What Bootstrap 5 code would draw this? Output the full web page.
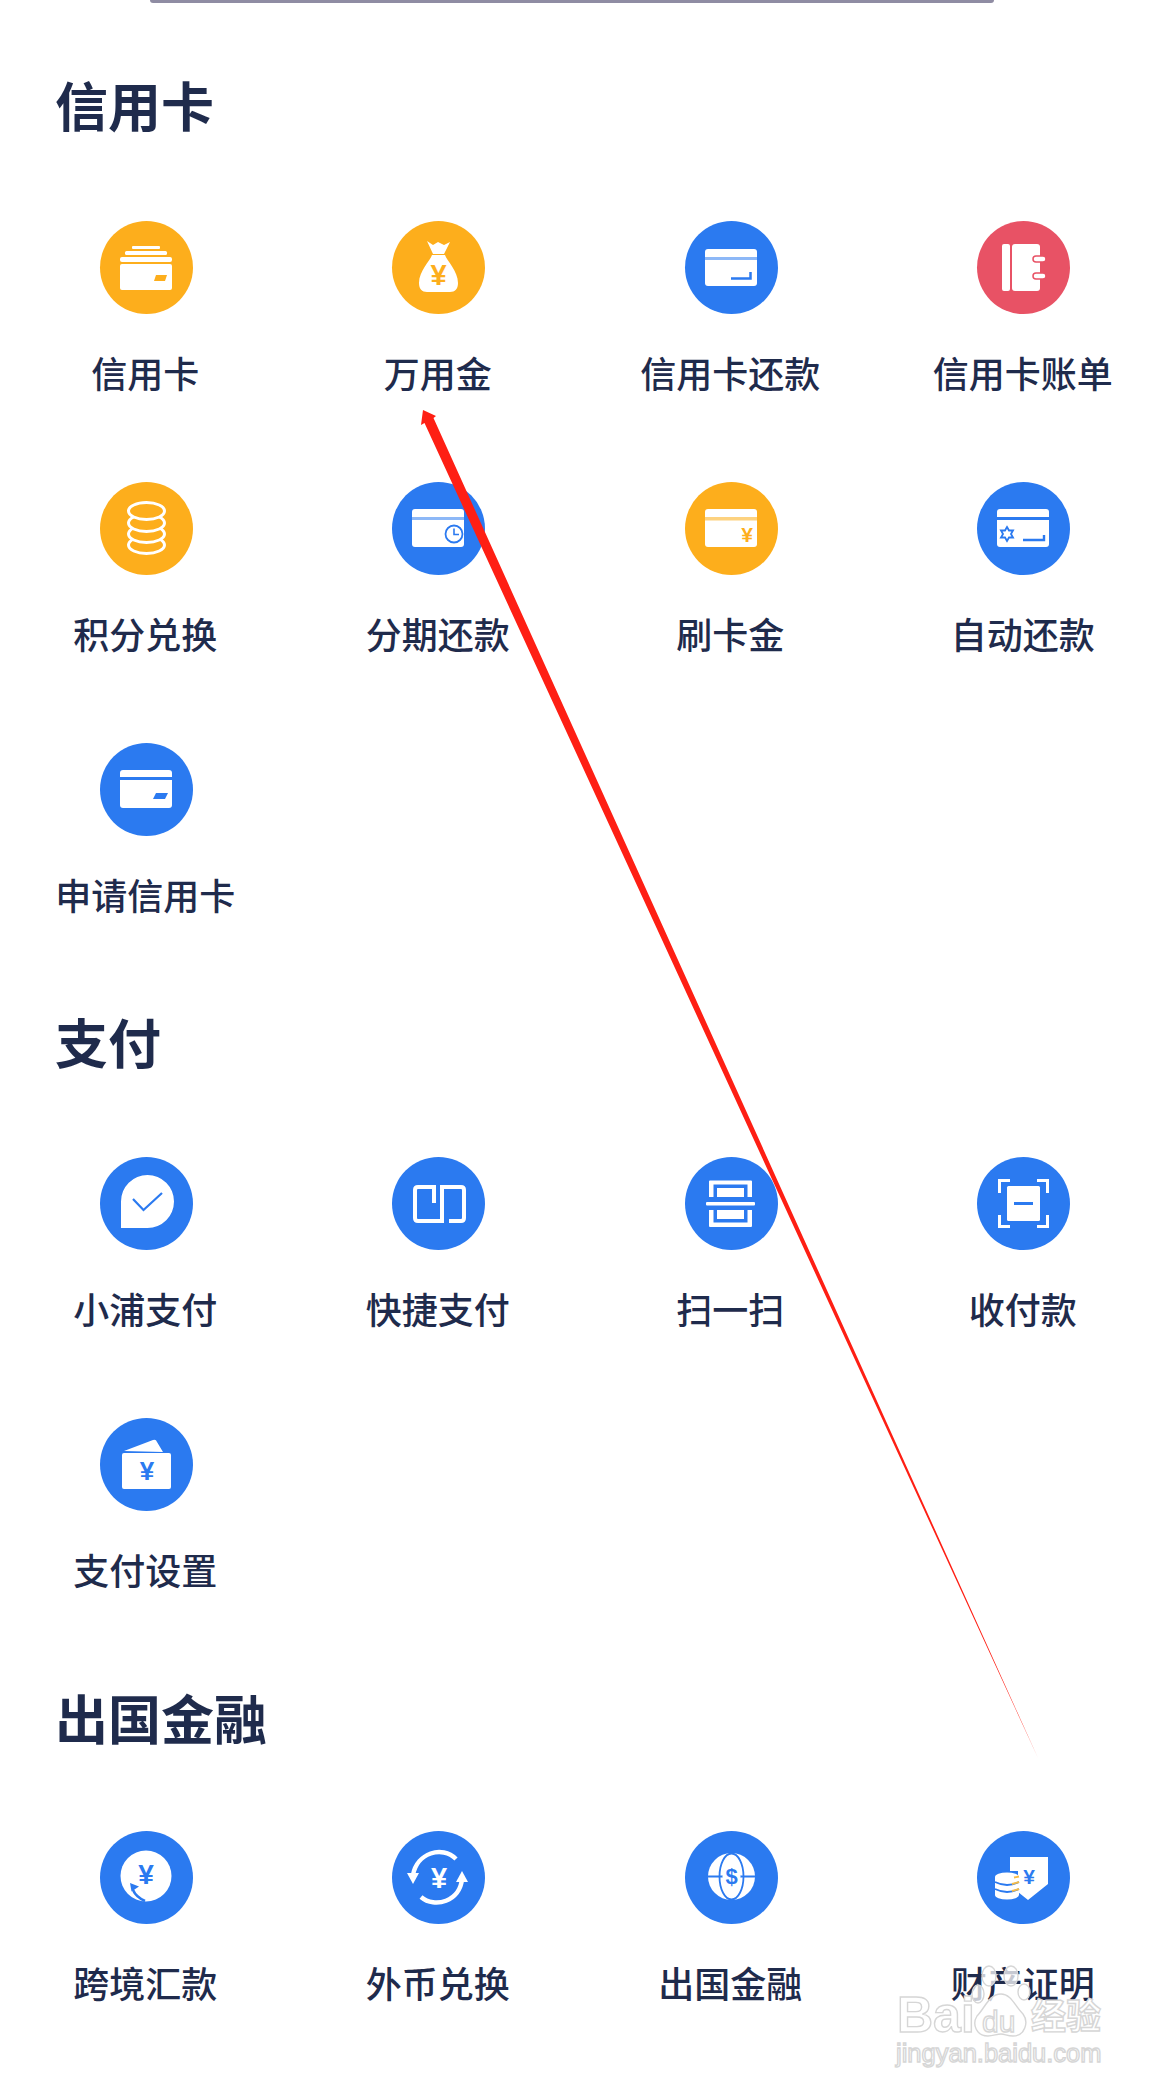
<!DOCTYPE html>
<html lang="zh-CN">
<head>
  <meta charset="UTF-8" />
  <meta name="viewport" content="width=device-width, initial-scale=1.0" />
  <title>信用卡</title>
  <link href="https://cdn.jsdelivr.net/npm/bootstrap@5.3.0/dist/css/bootstrap.min.css" rel="stylesheet" />
  <style>
    body {
      background: #fff;
      color: #1f2b4c;
      font-family: "Noto Sans CJK SC", "Liberation Sans", sans-serif;
      overflow: hidden;
    }
    .page-wrap { height: 2091px; }
    .top-bar {
      width: 844px;
      height: 3px;
      margin-left: 150px;
      background: #8f8ca3;
      border-radius: 0 0 8px 8px;
    }
    .sec-head {
      font-size: 53px;
      line-height: 70px;
      font-weight: 700;
      padding-left: 55px;
      color: #1f2b4c;
    }
    .sec-first { margin: 66px 0 82px; }
    .sec-pay { margin: 2px 0 81px; }
    .sec-abroad { margin: 3px 0 79px; }
    .grid-cell { height: 261px; }
    .ico { width: 93px; height: 93px; display: block; }
    .ico-blue { background: #2b7af0; }
    .ico-orange { background: #fdae1c; }
    .ico-red { background: #e85265; }
    .ico text { font-family: "Liberation Sans", sans-serif; font-weight: 700; text-anchor: middle; }
    .cell-label {
      margin-top: 34px;
      padding-right: 2px;
      font-size: 36px;
      font-weight: 500;
      line-height: 48px;
      white-space: nowrap;
    }
    .red-arrow { position: absolute; left: 0; top: 0; pointer-events: none; }
    .wm {
      position: absolute;
      left: 895px;
      top: 1960px;
      width: 215px;
      height: 110px;
      color: #fff;
      -webkit-text-stroke: 1.4px #d6d6d6;
      font-family: "Liberation Sans", sans-serif;
    }
    .wm-paw { position: absolute; left: 76px; top: 4px; }
    .wm-bai { position: absolute; left: 2px; top: 30px; font-size: 50px; line-height: 50px; font-weight: 700; }
    .wm-du { position: absolute; left: 87px; top: 47px; font-size: 30px; line-height: 30px; }
    .wm-jy { position: absolute; left: 136px; top: 31px; font-size: 35px; line-height: 46px; font-weight: 700; font-family: "Noto Sans CJK SC", sans-serif; }
    .wm-url { position: absolute; left: 1px; top: 78px; font-size: 25.5px; line-height: 30px; white-space: nowrap; }
  </style>
</head>
<body>
  <div class="page-wrap position-relative">
    <div class="top-bar"></div>

    <!-- 信用卡 -->
    <h2 class="sec-head sec-first">信用卡</h2>
    <div class="row row-cols-4 g-0">
      <div class="col grid-cell d-flex flex-column align-items-center">
        <svg class="ico ico-orange rounded-circle" viewBox="0 0 93 93">
          <rect x="32" y="25" width="28" height="3" rx="1" fill="#fff"/>
          <rect x="25" y="30" width="42" height="4" rx="1.5" fill="#fff"/>
          <rect x="20" y="36" width="52" height="5" rx="2" fill="#fff"/>
          <rect x="20" y="43" width="52" height="26" rx="2" fill="#fff"/>
          <path d="M56 54h11l-2 6H54z" fill="#fdae1c"/>
        </svg>
        <div class="cell-label">信用卡</div>
      </div>
      <div class="col grid-cell d-flex flex-column align-items-center">
        <svg class="ico ico-orange rounded-circle" viewBox="0 0 93 93">
          <path d="M35 20l6 4 5-3 6 3 6-3-6 12H41z" fill="#fff"/>
          <path d="M40 34h13c2 6 13 16 13 28 0 6-3 9-8 9H35c-5 0-8-3-8-9 0-12 11-22 13-28z" fill="#fff"/>
          <text x="46.500" y="64" font-size="29" fill="#fdae1c">¥</text>
        </svg>
        <div class="cell-label">万用金</div>
      </div>
      <div class="col grid-cell d-flex flex-column align-items-center">
        <svg class="ico ico-blue rounded-circle" viewBox="0 0 93 93">
          <rect x="20" y="28" width="52" height="37" rx="3" fill="#fff"/>
          <rect x="20" y="36" width="52" height="3" fill="#8db8f7"/>
          <path d="M46 57.500h19.500V51" fill="none" stroke="#2b7af0" stroke-width="2.500"/>
        </svg>
        <div class="cell-label">信用卡还款</div>
      </div>
      <div class="col grid-cell d-flex flex-column align-items-center">
        <svg class="ico ico-red rounded-circle" viewBox="0 0 93 93">
          <rect x="25" y="23" width="8" height="47" rx="2" fill="#fff"/>
          <rect x="35" y="23" width="28" height="47" rx="3" fill="#fff"/>
          <rect x="56" y="35" width="13" height="6" rx="3" fill="#fff" stroke="#e85265" stroke-width="1.500"/>
          <rect x="56" y="52" width="13" height="6" rx="3" fill="#fff" stroke="#e85265" stroke-width="1.500"/>
        </svg>
        <div class="cell-label">信用卡账单</div>
      </div>

      <div class="col grid-cell d-flex flex-column align-items-center">
        <svg class="ico ico-orange rounded-circle" viewBox="0 0 93 93">
          <g fill="#fdae1c" stroke="#fff" stroke-width="3">
            <ellipse cx="46.500" cy="63" rx="18" ry="8.500"/>
            <ellipse cx="46.500" cy="52" rx="18" ry="8.500"/>
            <ellipse cx="46.500" cy="41" rx="18" ry="8.500"/>
            <ellipse cx="46.500" cy="29" rx="18" ry="8.500"/>
          </g>
        </svg>
        <div class="cell-label">积分兑换</div>
      </div>
      <div class="col grid-cell d-flex flex-column align-items-center">
        <svg class="ico ico-blue rounded-circle" viewBox="0 0 93 93">
          <rect x="20" y="27" width="52" height="38" rx="3" fill="#fff"/>
          <rect x="20" y="35" width="52" height="3" fill="#8db8f7"/>
          <circle cx="62" cy="52" r="8.500" fill="#fff" stroke="#2b7af0" stroke-width="1.800"/>
          <path d="M62 46.500V52.500h5" fill="none" stroke="#2b7af0" stroke-width="1.600"/>
        </svg>
        <div class="cell-label">分期还款</div>
      </div>
      <div class="col grid-cell d-flex flex-column align-items-center">
        <svg class="ico ico-orange rounded-circle" viewBox="0 0 93 93">
          <rect x="20" y="27" width="52" height="38" rx="3" fill="#fff"/>
          <rect x="20" y="35" width="52" height="3.500" fill="#fdd27f"/>
          <text x="62" y="60" font-size="21" fill="#fdae1c">¥</text>
        </svg>
        <div class="cell-label">刷卡金</div>
      </div>
      <div class="col grid-cell d-flex flex-column align-items-center">
        <svg class="ico ico-blue rounded-circle" viewBox="0 0 93 93">
          <rect x="20" y="27" width="52" height="38" rx="3" fill="#fff"/>
          <rect x="20" y="35" width="52" height="3" fill="#2b7af0"/>
          <path d="M30 45l2 3.500h4l-2 3.500 2 3.500h-4L30 59l-2-3.500h-4l2-3.500-2-3.500h4z" fill="none" stroke="#2b7af0" stroke-width="1.800"/>
          <path d="M46 58h21v-5" fill="none" stroke="#2b7af0" stroke-width="2.400"/>
        </svg>
        <div class="cell-label">自动还款</div>
      </div>

      <div class="col grid-cell d-flex flex-column align-items-center">
        <svg class="ico ico-blue rounded-circle" viewBox="0 0 93 93">
          <rect x="20" y="27" width="52" height="38" rx="3" fill="#fff"/>
          <rect x="20" y="34" width="52" height="3" fill="#2b7af0"/>
          <path d="M56 50h12l-3 6H53z" fill="#2b7af0"/>
        </svg>
        <div class="cell-label">申请信用卡</div>
      </div>
    </div>

    <!-- 支付 -->
    <h2 class="sec-head sec-pay">支付</h2>
    <div class="row row-cols-4 g-0">
      <div class="col grid-cell d-flex flex-column align-items-center">
        <svg class="ico ico-blue rounded-circle" viewBox="0 0 93 93">
          <path d="M21 71V44.500a26.500 26.500 0 1 1 26.500 26.500z" fill="#fff"/>
          <path d="M33 42l10.500 11L62 36" fill="none" stroke="#2b7af0" stroke-width="2.200"/>
        </svg>
        <div class="cell-label">小浦支付</div>
      </div>
      <div class="col grid-cell d-flex flex-column align-items-center">
        <svg class="ico ico-blue rounded-circle" viewBox="0 0 93 93">
          <path d="M42 46V30H26q-3 0-3 3v28q0 3 3 3h24V30h19q3 0 3 3v28q0 3-3 3H57" fill="none" stroke="#fff" stroke-width="4"/>
        </svg>
        <div class="cell-label">快捷支付</div>
      </div>
      <div class="col grid-cell d-flex flex-column align-items-center">
        <svg class="ico ico-blue rounded-circle" viewBox="0 0 93 93">
          <path d="M24 40V24.500a1 1 0 0 1 1-1h41a1 1 0 0 1 1 1V40h-4.500V27.500h-34V40z" fill="#fff"/>
          <path d="M24 53v16a1 1 0 0 0 1 1h41a1 1 0 0 0 1-1V53h-4.500v12.500h-34V53z" fill="#fff"/>
          <rect x="32" y="31" width="27" height="9" fill="#fff"/>
          <rect x="32" y="53" width="27" height="9" fill="#fff"/>
          <rect x="21" y="45" width="49" height="3.500" rx="1" fill="#fff"/>
        </svg>
        <div class="cell-label">扫一扫</div>
      </div>
      <div class="col grid-cell d-flex flex-column align-items-center">
        <svg class="ico ico-blue rounded-circle" viewBox="0 0 93 93">
          <g fill="none" stroke="#fff" stroke-width="3">
            <path d="M22.500 36V23.500H33"/>
            <path d="M60 23.500h10.500V36"/>
            <path d="M22.500 58v11.500H33"/>
            <path d="M60 69.500h10.500V58"/>
          </g>
          <rect x="30" y="29" width="33" height="35" rx="1.500" fill="#fff"/>
          <rect x="37" y="45" width="19" height="3" fill="#2b7af0"/>
        </svg>
        <div class="cell-label">收付款</div>
      </div>

      <div class="col grid-cell d-flex flex-column align-items-center">
        <svg class="ico ico-blue rounded-circle" viewBox="0 0 93 93">
          <path d="M24 33l29-11q3-1 4 2l6 10z" fill="#fff"/>
          <rect x="22" y="35" width="49" height="36" rx="2" fill="#fff"/>
          <text x="47" y="62" font-size="26" fill="#2b7af0">¥</text>
        </svg>
        <div class="cell-label">支付设置</div>
      </div>
    </div>

    <!-- 出国金融 -->
    <h2 class="sec-head sec-abroad">出国金融</h2>
    <div class="row row-cols-4 g-0">
      <div class="col grid-cell d-flex flex-column align-items-center">
        <svg class="ico ico-blue rounded-circle" viewBox="0 0 93 93">
          <circle cx="46" cy="45" r="25.500" fill="#fff"/>
          <text x="46" y="53" font-size="28" fill="#2b7af0">¥</text>
          <path d="M33 59q3 7 12 11" fill="none" stroke="#2b7af0" stroke-width="2.600"/>
          <path d="M30 52l9 3.500-7.500 5z" fill="#2b7af0"/>
        </svg>
        <div class="cell-label">跨境汇款</div>
      </div>
      <div class="col grid-cell d-flex flex-column align-items-center">
        <svg class="ico ico-blue rounded-circle" viewBox="0 0 93 93">
          <g fill="none" stroke="#fff" stroke-width="4.500">
            <path d="M64 28C50 14 25 22 21 44"/>
            <path d="M29 66c14 12 39 4 41-18"/>
          </g>
          <path d="M15 42h12l-6 11z" fill="#fff"/>
          <path d="M64 51h12l-6-11z" fill="#fff"/>
          <text x="47" y="57" font-size="29" fill="#fff">¥</text>
        </svg>
        <div class="cell-label">外币兑换</div>
      </div>
      <div class="col grid-cell d-flex flex-column align-items-center">
        <svg class="ico ico-blue rounded-circle" viewBox="0 0 93 93">
          <circle cx="46.500" cy="45.500" r="23.500" fill="#fff"/>
          <ellipse cx="46.500" cy="45.500" rx="12" ry="23" fill="none" stroke="#2b7af0" stroke-width="1.800"/>
          <path d="M23 45.500h47" stroke="#2b7af0" stroke-width="1.800"/>
          <ellipse cx="46.500" cy="45.500" rx="9" ry="14" fill="#fff"/>
          <text x="46.500" y="53" font-size="22" fill="#2b7af0">$</text>
        </svg>
        <div class="cell-label">出国金融</div>
      </div>
      <div class="col grid-cell d-flex flex-column align-items-center">
        <svg class="ico ico-blue rounded-circle" viewBox="0 0 93 93">
          <path d="M33 26h38v27L51 69 41 61V40h-8z" fill="#fff"/>
          <text x="52" y="53" font-size="21" fill="#2b7af0">¥</text>
          <rect x="18" y="46" width="24" height="18" fill="#fff"/>
          <ellipse cx="30" cy="46" rx="12" ry="4.500" fill="#fff"/>
          <ellipse cx="30" cy="64" rx="12" ry="4.500" fill="#fff"/>
          <path d="M18 51q12 6 24 0M18 58q12 6 24 0" fill="none" stroke="#2b7af0" stroke-width="1.800"/>
          <path d="M35 53q4-1 7-2M35 60q4-1 7-2M37 46.500q3-.5 5-1" fill="none" stroke="#f7bc45" stroke-width="2"/>
        </svg>
        <div class="cell-label">财产证明</div>
      </div>
    </div>

    <!-- 红色箭头 -->
    <svg class="red-arrow" width="1170" height="2091" viewBox="0 0 1170 2091">
      <path d="M423 410l13 6-2.500 2L1038 1758 424.500 423l-3.500 2z" fill="#fe1f14"/>
    </svg>

    <!-- 水印 -->
    <div class="wm">
      <svg class="wm-paw" width="62" height="76" viewBox="0 0 62 76">
        <g fill="#fff" fill-opacity=".75" stroke="#d6d6d6" stroke-width="1.400">
          <ellipse cx="18" cy="12" rx="7" ry="10"/>
          <ellipse cx="40" cy="12" rx="7" ry="10"/>
          <ellipse cx="7" cy="30" rx="6" ry="9"/>
          <ellipse cx="53" cy="28" rx="6" ry="8"/>
          <path d="M30 30c10 0 14 12 22 20 6 8 2 22-10 22-6 0-8-2-12-2s-8 2-13 2C5 72 1 60 6 52c8-8 12-22 24-22z"/>
        </g>
      </svg>
      <div class="wm-bai">Bai</div>
      <div class="wm-du">du</div>
      <div class="wm-jy">经验</div>
      <div class="wm-url">jingyan.baidu.com</div>
    </div>
  </div>

  <script src="https://cdn.jsdelivr.net/npm/bootstrap@5.3.0/dist/js/bootstrap.bundle.min.js"></script>
</body>
</html>
